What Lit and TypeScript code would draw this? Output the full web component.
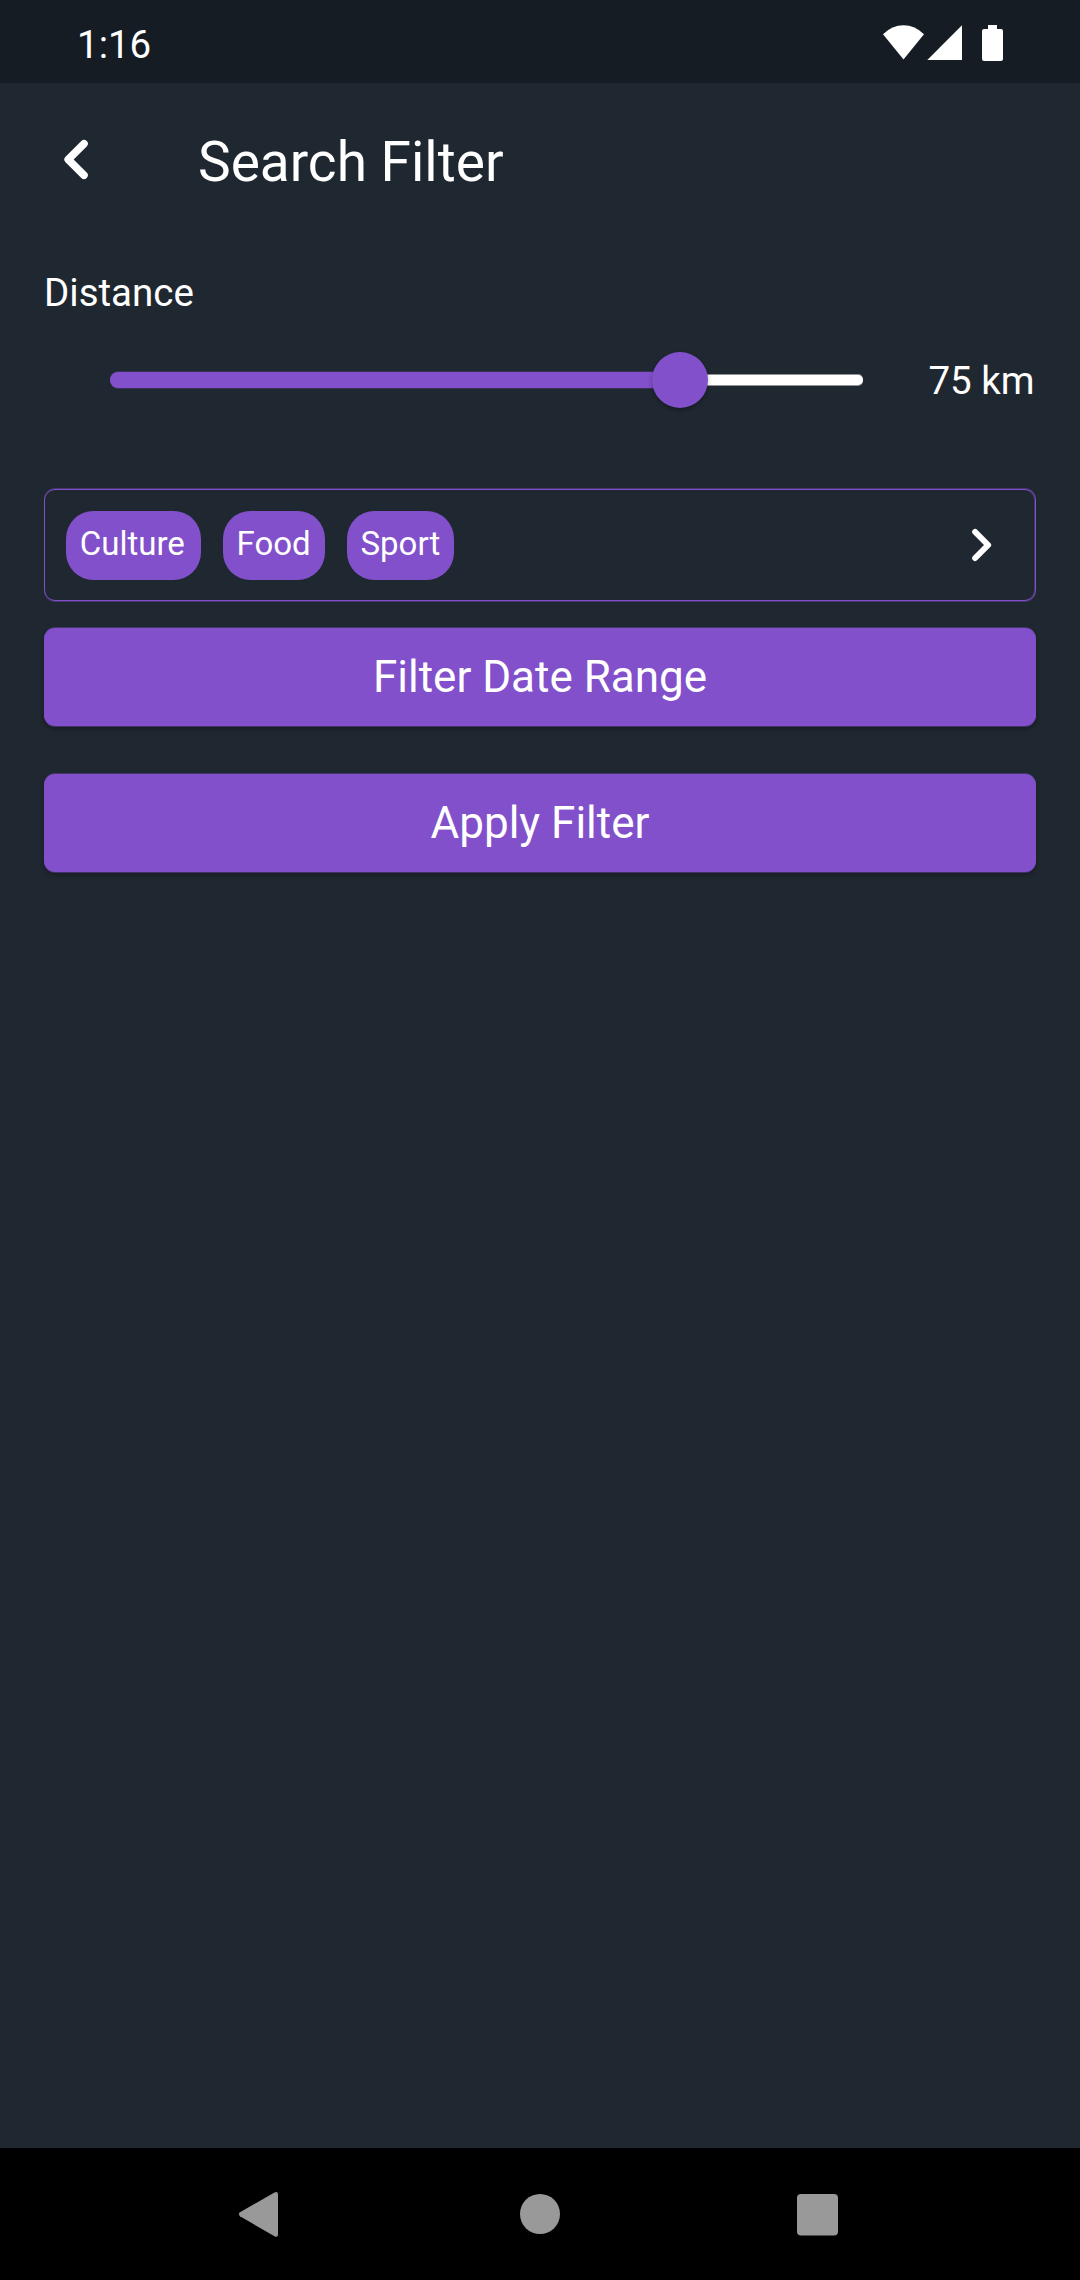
import { LitElement, html, css } from "lit";
import { customElement, state } from "lit/decorators.js";

@customElement("app-root")
export class AppRoot extends LitElement {
  @state() private distance = 75;
  @state() private tags = ["Culture", "Food", "Sport"];

  static styles = css`
    :host {
      display: flex;
      flex-direction: column;
      width: 1080px;
      height: 2280px;
      overflow: hidden;
      background: #1f2730;
      color: #fff;
      font-family: Roboto, "Liberation Sans", sans-serif;
      font-size: 38.5px;
    }
    * { box-sizing: border-box; }
    svg { display: block; flex: none; }
    .status {
      height: 83px;
      flex: none;
      background: #161c23;
      display: flex;
      justify-content: space-between;
      padding-left: 77px;
    }
    .clock { line-height: 46px; padding-top: 22px; }
    .appbar { height: 154px; flex: none; display: flex; align-items: center; }
    .back { margin-left: 60px; }
    .title {
      margin: 0 0 0 106px;
      padding-top: 4px;
      font-size: 55px;
      line-height: 64px;
      font-weight: 400;
    }
    .body { flex: 1; padding: 32px 44px 0; display: flex; flex-direction: column; }
    .label { line-height: 46px; margin-top: 1px; }
    .range { display: flex; align-items: center; height: 132px; margin-top: -2px; }
    .slider { width: 753px; height: 56px; margin-left: 66px; display: flex; align-items: center; }
    .active {
      height: 16px;
      background: #8250ca;
      border-radius: 8px 0 0 8px;
      box-shadow: 0 -1px 0 rgba(130, 80, 202, 0.25), 0 1px 0 rgba(130, 80, 202, 0.25);
    }
    .thumb {
      width: 56px;
      height: 56px;
      flex: none;
      margin: 0 -28px;
      border-radius: 50%;
      background: #8250ca;
      box-shadow: 0 2px 4px rgba(0, 0, 0, 0.3);
      z-index: 1;
    }
    .rest {
      flex: 1;
      height: 10px;
      background: #fff;
      border-radius: 0 5px 5px 0;
      box-shadow: 0 -1px 0 rgba(255, 255, 255, 0.5), 0 1px 0 rgba(255, 255, 255, 0.5);
    }
    .value { margin-left: auto; padding-right: 1.5px; }
    .picker {
      margin-top: 43px;
      height: 112px;
      flex: none;
      border: 1px solid #8250ca;
      border-radius: 11px;
      box-shadow: 0 -1px 0 rgba(130, 80, 202, 0.4), 0 1px 0 rgba(130, 80, 202, 0.4),
        inset -1px 0 0 rgba(130, 80, 202, 0.4);
      display: flex;
      align-items: center;
      gap: 22px;
      padding: 0 39px 0 21px;
    }
    .chip {
      height: 69px;
      margin-top: 1px;
      padding: 13px 14px 0 13.75px;
      line-height: 39px;
      border-radius: 27.5px;
      background: #8250ca;
      font-size: 33px;
    }
    .chip:first-child { padding-right: 16px; }
    .go { margin-left: auto; }
    .btn {
      height: 98px;
      flex: none;
      margin: 27px 0 0;
      padding: 0;
      border: 0;
      border-radius: 11px;
      background: #8250ca;
      color: #fff;
      font: 400 44px/52px Roboto, "Liberation Sans", sans-serif;
      box-shadow: 0 -1px 0 rgba(130, 80, 202, 0.4), 0 1px 0 rgba(130, 80, 202, 0.4),
        0 3px 5px rgba(0, 0, 0, 0.3);
    }
    .apply { margin-top: 48px; }
    .nav { height: 132px; flex: none; background: #000; }
  `;

  render() {
    return html`
      <div class="status">
        <span class="clock">1:16</span>
        <svg width="240" height="83" viewBox="0 0 240 83" fill="#fff">
          <path d="M63.5 59.5 43 34.2Q52 25.2 63.5 25.2T84 34.2Z" />
          <path d="M87.3 60H122V25.3Z" />
          <path d="M148 25h9v4h4q2 0 2 2v28q0 2-2 2h-17q-2 0-2-2v-28q0-2 2-2h4z" />
        </svg>
      </div>
      <header class="appbar">
        <svg class="back" width="32" height="48" viewBox="0 0 32 48" fill="none" stroke="#fff"
          stroke-width="7.6" stroke-linecap="round" stroke-linejoin="round">
          <path d="M24 7.8 8.2 23.5 24 39.2" />
        </svg>
        <h1 class="title">Search Filter</h1>
      </header>
      <main class="body">
        <div class="label">Distance</div>
        <div class="range">
          <div class="slider">
            <div class="active" style="width:${(this.distance / 99) * 100}%"></div>
            <div class="thumb"></div>
            <div class="rest"></div>
          </div>
          <span class="value">${this.distance} km</span>
        </div>
        <div class="picker">
          ${this.tags.map((t) => html`<span class="chip">${t}</span>`)}
          <svg class="go" width="28" height="40" viewBox="0 0 28 40" fill="none" stroke="#fff"
            stroke-width="6" stroke-linecap="round" stroke-linejoin="round">
            <path d="M7.2 7 20.1 20 7.2 33" />
          </svg>
        </div>
        <button class="btn">Filter Date Range</button>
        <button class="btn apply">Apply Filter</button>
      </main>
      <svg class="nav" width="1080" height="132" viewBox="0 0 1080 132" fill="#999">
        <path d="M240 64.2 274.5 44.5Q278 43 278 46.5V86.5Q278 90 274.5 88.3L240 68.3Q238 66.2 240 64.2Z" />
        <circle cx="540" cy="66" r="20" />
        <rect x="797" y="46" width="41" height="41.5" rx="4" />
      </svg>
    `;
  }
}
